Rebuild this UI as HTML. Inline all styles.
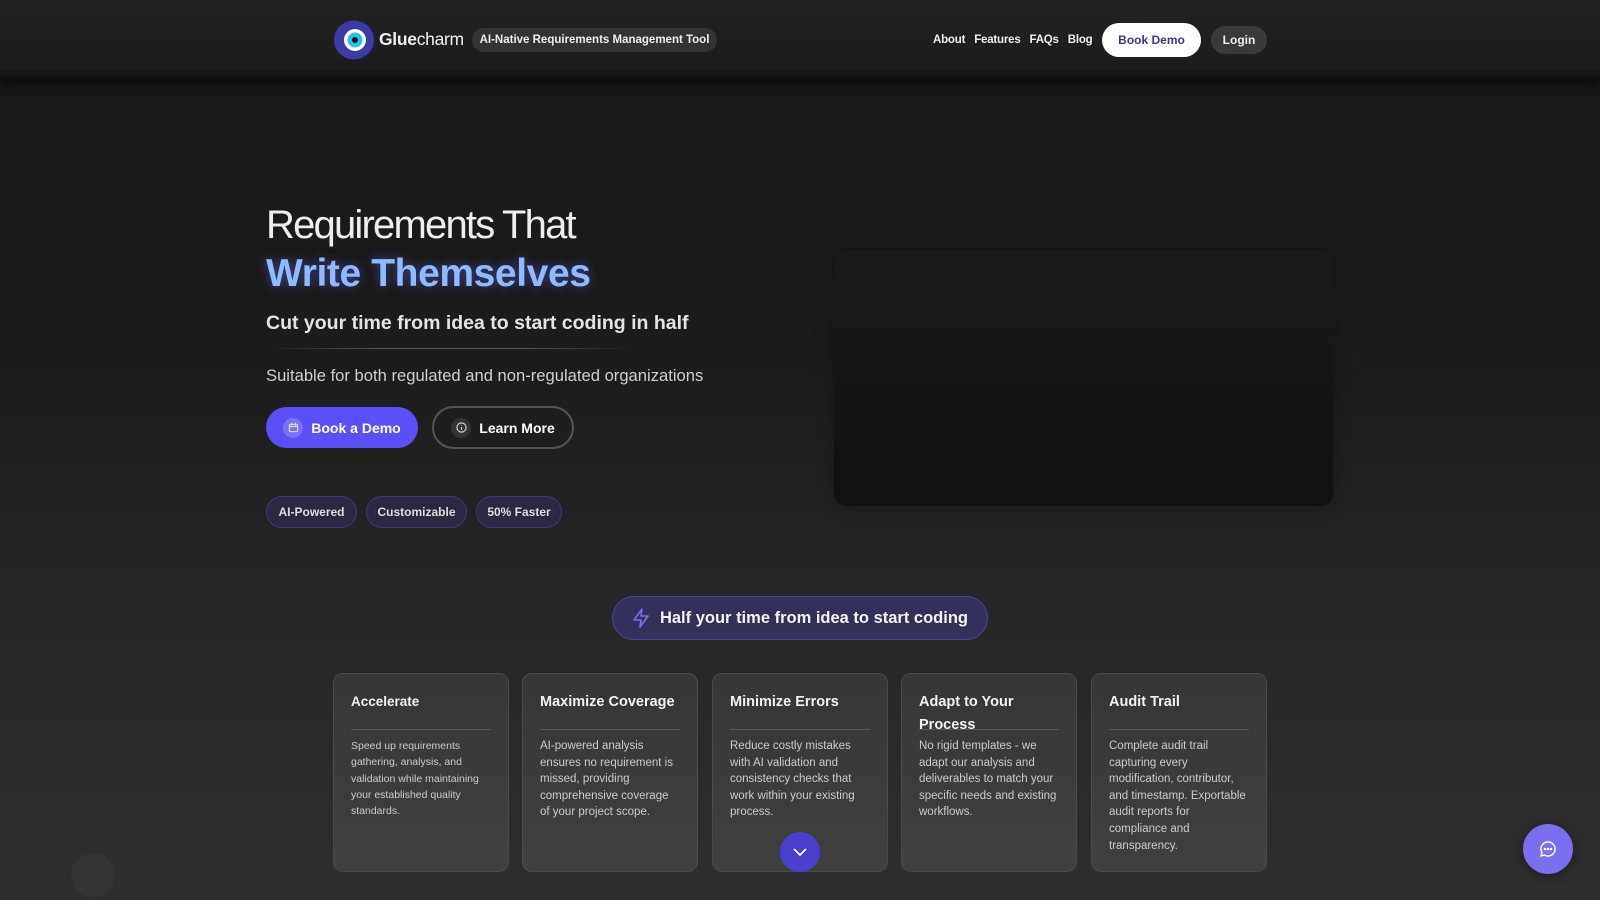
<!DOCTYPE html>
<html><head><meta charset="utf-8"><style>
*{margin:0;padding:0;box-sizing:border-box}
body{width:1600px;height:900px;overflow:hidden;font-family:"Liberation Sans",sans-serif;color:#fff;background:linear-gradient(180deg,#161616 0%,#1c1c1c 40%,#262626 65%,#2e2e2e 100%);position:relative}
.nav{position:absolute;left:0;top:0;width:1600px;height:80px;background:linear-gradient(180deg,#222 0%,#1c1c1c 85%,#0c0c0c 100%);box-shadow:0 4px 10px rgba(0,0,0,.6)}
.abs{position:absolute}
.pill{border-radius:999px;display:flex;align-items:center;justify-content:center}
.card{position:absolute;top:673px;width:176px;height:199px;border:1px solid #4a4a4a;border-radius:10px;background:linear-gradient(180deg,#363636,#404040);padding:17px 17px}
.card h3{font-size:14.5px;font-weight:bold;color:#f2f2f2;line-height:23px;height:39px;border-bottom:1px solid #555;margin-bottom:8px}
.card p{font-size:11.5px;color:#ccc;line-height:16.6px}
</style></head><body>
<div class="nav">
  <svg class="abs" style="left:333px;top:20px" width="42" height="40" viewBox="0 0 42 40"><ellipse cx="21" cy="20" rx="20" ry="19.5" fill="#3d3aa8"/><circle cx="22" cy="20" r="11" fill="#fff"/><circle cx="22" cy="20" r="7.5" fill="#24c3ea"/><circle cx="22" cy="20" r="3" fill="#111"/></svg>
  <div class="abs" style="left:379px;top:29px;font-size:17.5px;color:#f0f0f0;letter-spacing:-0.3px"><b>Glue</b>charm</div>
  <div class="abs pill" style="left:472px;top:28px;width:245px;height:24px;background:#333;font-size:11.5px;font-weight:bold;color:#eee">AI-Native Requirements Management Tool</div>
  <div class="abs" style="left:933px;top:34px;font-size:11.5px;font-weight:bold;color:#eee;letter-spacing:-0.2px">About&nbsp;&nbsp;&nbsp;Features&nbsp;&nbsp;&nbsp;FAQs&nbsp;&nbsp;&nbsp;Blog</div>
  <div class="abs pill" style="left:1102px;top:23px;width:99px;height:34px;background:#fff;color:#3b36a0;font-size:12px;font-weight:bold">Book Demo</div>
  <div class="abs pill" style="left:1211px;top:26px;width:56px;height:28px;background:#3a3a3a;color:#eee;font-size:12px;font-weight:bold">Login</div>
</div>

<div class="abs" style="left:266px;top:202px;font-size:40px;color:#eee;letter-spacing:-1.8px;line-height:46px">Requirements That</div>
<div class="abs" style="left:266px;top:251px;font-size:39px;font-weight:bold;color:#8fbaff;letter-spacing:-0.4px;line-height:46px;text-shadow:0 0 10px rgba(110,110,255,.5)">Write Themselves</div>
<div class="abs" style="left:266px;top:312px;font-size:19.5px;font-weight:bold;color:#e4e4e4;letter-spacing:0">Cut your time from idea to start coding in half</div>
<div class="abs" style="left:266px;top:348px;width:370px;height:1px;background:linear-gradient(90deg,transparent,#555 30%,#555 70%,transparent)"></div>
<div class="abs" style="left:266px;top:366px;font-size:16.6px;color:#cfcfcf">Suitable for both regulated and non-regulated organizations</div>

<div class="abs pill" style="left:266px;top:407px;width:152px;height:41px;background:#5b4ff7;font-size:14px;font-weight:bold">
  <span style="width:20px;height:20px;border-radius:50%;background:#7a70fa;display:inline-flex;align-items:center;justify-content:center;margin-right:8px"><svg width="11" height="11" viewBox="0 0 12 12" fill="none" stroke="#ddd" stroke-width="1.2"><rect x="1.5" y="2.5" width="9" height="8" rx="1.5"/><path d="M1.5 5h9M4 1v3M8 1v3"/></svg></span>Book a Demo</div>
<div class="abs pill" style="left:432px;top:406px;width:142px;height:43px;border:2px solid #555;background:#1e1e1e;font-size:14px;font-weight:bold">
  <span style="width:20px;height:20px;border-radius:50%;background:#333;display:inline-flex;align-items:center;justify-content:center;margin-right:8px"><svg width="11" height="11" viewBox="0 0 12 12" fill="none" stroke="#ddd" stroke-width="1.2"><circle cx="6" cy="6" r="5"/><path d="M6 5.5v3M6 3.5v.5"/></svg></span>Learn More</div>

<div class="abs pill" style="left:266px;top:496px;width:91px;height:32px;border:1px solid #3d3780;background:#2b2840;font-size:12px;font-weight:bold;color:#ddd">AI-Powered</div>
<div class="abs pill" style="left:366px;top:496px;width:101px;height:32px;border:1px solid #3d3780;background:#2b2840;font-size:12px;font-weight:bold;color:#ddd">Customizable</div>
<div class="abs pill" style="left:476px;top:496px;width:86px;height:32px;border:1px solid #3d3780;background:#2b2840;font-size:12px;font-weight:bold;color:#ddd">50% Faster</div>

<div class="abs" style="left:834px;top:250px;width:499px;height:256px;border-radius:12px;background:linear-gradient(180deg,#1a1a1a,#111 100%);box-shadow:0 0 20px rgba(0,0,0,.3)"></div>

<div class="abs pill" style="left:612px;top:596px;width:376px;height:44px;border:1px solid #4a43a0;background:#33305a;font-size:16.5px;font-weight:bold;color:#f4f4f4">
  <svg width="18" height="20" viewBox="0 0 18 20" fill="none" stroke="#7d6ff5" stroke-width="1.6" stroke-linejoin="round" style="margin-right:10px"><path d="M10 1L2 12h7l-1 7 8-11H9z"/></svg>Half your time from idea to start coding</div>

<div class="card" style="left:333px"><h3 style="font-size:13.5px;line-height:21px">Accelerate</h3><p style="font-size:10.5px;line-height:16.3px">Speed up requirements gathering, analysis, and validation while maintaining your established quality standards.</p></div>
<div class="card" style="left:522px"><h3>Maximize Coverage</h3><p>AI-powered analysis ensures no requirement is missed, providing comprehensive coverage of your project scope.</p></div>
<div class="card" style="left:712px"><h3>Minimize Errors</h3><p>Reduce costly mistakes with AI validation and consistency checks that work within your existing process.</p></div>
<div class="card" style="left:901px"><h3>Adapt to Your Process</h3><p>No rigid templates - we adapt our analysis and deliverables to match your specific needs and existing workflows.</p></div>
<div class="card" style="left:1091px"><h3>Audit Trail</h3><p>Complete audit trail capturing every modification, contributor, and timestamp. Exportable audit reports for compliance and transparency.</p></div>

<div class="abs pill" style="left:780px;top:832px;width:40px;height:40px;border-radius:50%;background:#4a3fcf"><svg width="14" height="9" viewBox="0 0 14 9" fill="none" stroke="#fff" stroke-width="1.8"><path d="M1 1l6 6 6-6"/></svg></div>
<div class="abs pill" style="left:1523px;top:824px;width:50px;height:50px;border-radius:50%;background:#7b6ff0;box-shadow:0 2px 10px rgba(0,0,0,.4)"><svg width="18" height="18" viewBox="0 0 18 18" fill="none" stroke="#fff" stroke-width="1.4"><path d="M9 2a7 7 0 1 1-3.5 13L2 16l1-3.3A7 7 0 0 1 9 2z"/><circle cx="6" cy="9" r=".6" fill="#fff"/><circle cx="9" cy="9" r=".6" fill="#fff"/><circle cx="12" cy="9" r=".6" fill="#fff"/></svg></div>
<div class="abs" style="left:71px;top:853px;width:44px;height:44px;border-radius:50%;background:#333"></div>
</body></html>
